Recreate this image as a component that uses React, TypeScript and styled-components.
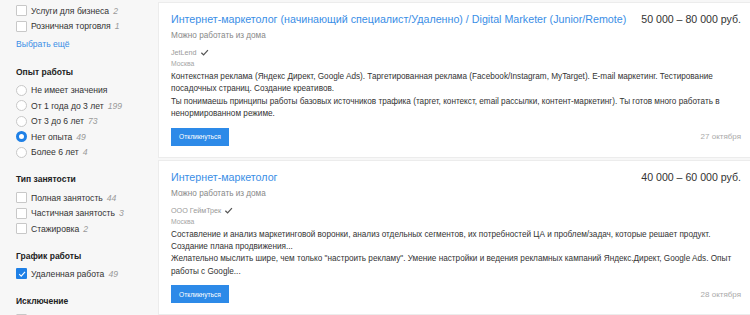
import React from 'react';
import styled, { createGlobalStyle } from 'styled-components';

const Global = createGlobalStyle`
  html, body { margin: 0; padding: 0; background: #f7f7f7; overflow: hidden; }
  body { font-family: "Liberation Sans", Arial, sans-serif; }
`;

const Page = styled.div`
  display: flex;
  width: 752px;
  height: 315px;
  overflow: hidden;
`;

const Sidebar = styled.aside`
  width: 158px;
  flex: none;
  box-sizing: border-box;
  padding: 3px 0 0 16px;
  color: #333;
`;

const Row = styled.div`
  display: flex;
  align-items: center;
  height: 15.5px;
  font-size: 8.6px;
  white-space: nowrap;
`;

const Box = styled.span<{ $round?: boolean; $checked?: boolean }>`
  width: 11px;
  height: 11px;
  flex: none;
  box-sizing: border-box;
  margin-right: 4px;
  background: ${(p) => (p.$checked && !p.$round ? '#1f80e6' : '#fff')};
  border: ${(p) =>
    p.$checked ? (p.$round ? '3.5px solid #1f80e6' : 'none') : '1px solid #c8c8c8'};
  border-radius: ${(p) => (p.$round ? '50%' : '1px')};
  display: flex;
  align-items: center;
  justify-content: center;
`;

const Count = styled.span`
  margin-left: 4px;
  font-style: italic;
  color: #9a9a9a;
`;

const More = styled.a`
  display: block;
  margin-top: 3px;
  height: 14px;
  line-height: 14px;
  font-size: 8.6px;
  color: #3a8ee6;
  text-decoration: none;
`;

const Heading = styled.div<{ $first?: boolean }>`
  margin-top: ${(p) => (p.$first ? '14px' : '12.25px')};
  margin-bottom: 3.5px;
  height: 14px;
  line-height: 14px;
  font-size: 8.5px;
  font-weight: bold;
  color: #222;
`;

const Main = styled.main`
  flex: 1;
  min-width: 0;
  display: flex;
  flex-direction: column;
  gap: 2px;
  padding-top: 2px;
`;

const Card = styled.article`
  background: #fff;
  border: 1px solid #ececec;
  padding: 9px 10px 11px 12px;
`;

const TitleRow = styled.div`
  display: flex;
  justify-content: space-between;
  align-items: baseline;
  line-height: 14px;
`;

const Title = styled.a`
  font-size: 10.7px;
  color: #3a8ee6;
  text-decoration: none;
`;

const Salary = styled.span`
  font-size: 10.6px;
  color: #333;
  white-space: nowrap;
`;

const Sub = styled.div`
  margin-top: 3px;
  font-size: 8.2px;
  line-height: 13px;
  color: #888;
`;

const Company = styled.div`
  margin-top: 5px;
  display: flex;
  align-items: center;
  gap: 3px;
  font-size: 7.2px;
  line-height: 11px;
  color: #999;
`;

const City = styled.div`
  font-size: 6.8px;
  line-height: 11px;
  color: #a5a5a5;
`;

const Desc = styled.div`
  margin-top: 2px;
  font-size: 8.2px;
  line-height: 12.3px;
  color: #333;
`;

const Line = styled.div`
  white-space: nowrap;
`;

const Footer = styled.div`
  margin-top: 7.5px;
  display: flex;
  justify-content: space-between;
  align-items: center;
`;

const Button = styled.button`
  height: 18px;
  width: 58px;
  padding: 0;
  border: none;
  background: #2d8ae8;
  color: #fff;
  font-family: inherit;
  font-size: 6.6px;
`;

const DateText = styled.span`
  font-size: 8px;
  color: #aaa;
`;

const Check = ({ color = '#fff', size = 8 }: { color?: string; size?: number }) => (
  <svg width={size} height={size} viewBox="0 0 10 10">
    <polyline points="1.5,5.2 4,7.6 8.8,2.4" fill="none" stroke={color} strokeWidth="1.4" />
  </svg>
);

type Opt = { label: string; count?: string; checked?: boolean };

const Checks = ({ items, round }: { items: Opt[]; round?: boolean }) => (
  <>
    {items.map((o) => (
      <Row key={o.label}>
        <Box $round={round} $checked={o.checked}>
          {o.checked && !round && <Check />}
        </Box>
        {o.label}
        {o.count && <Count>{o.count}</Count>}
      </Row>
    ))}
  </>
);

type Job = {
  title: string;
  salary: string;
  company: string;
  lines: string[];
  date: string;
};

const jobs: Job[] = [
  {
    title:
      'Интернет-маркетолог (начинающий специалист/Удаленно) / Digital Marketer (Junior/Remote)',
    salary: '50 000 – 80 000 руб.',
    company: 'JetLend',
    lines: [
      'Контекстная реклама (Яндекс Директ, Google Ads). Таргетированная реклама (Facebook/Instagram, MyTarget). E-mail маркетинг. Тестирование',
      'посадочных страниц. Создание креативов.',
      'Ты понимаешь принципы работы базовых источников трафика (таргет, контекст, email рассылки, контент-маркетинг). Ты готов много работать в',
      'ненормированном режиме.',
    ],
    date: '27 октября',
  },
  {
    title: 'Интернет-маркетолог',
    salary: '40 000 – 60 000 руб.',
    company: 'ООО ГеймТрек',
    lines: [
      'Составление и анализ маркетинговой воронки, анализ отдельных сегментов, их потребностей ЦА и проблем/задач, которые решает продукт.',
      'Создание плана продвижения...',
      'Желательно мыслить шире, чем только "настроить рекламу". Умение настройки и ведения рекламных кампаний Яндекс.Директ, Google Ads. Опыт',
      'работы с Google...',
    ],
    date: '28 октября',
  },
];

export default function App() {
  return (
    <>
      <Global />
      <Page>
        <Sidebar>
          <Checks
            items={[
              { label: 'Услуги для бизнеса', count: '2' },
              { label: 'Розничная торговля', count: '1' },
            ]}
          />
          <More href="#">Выбрать ещё</More>
          <Heading $first>Опыт работы</Heading>
          <Checks
            round
            items={[
              { label: 'Не имеет значения' },
              { label: 'От 1 года до 3 лет', count: '199' },
              { label: 'От 3 до 6 лет', count: '73' },
              { label: 'Нет опыта', count: '49', checked: true },
              { label: 'Более 6 лет', count: '4' },
            ]}
          />
          <Heading>Тип занятости</Heading>
          <Checks
            items={[
              { label: 'Полная занятость', count: '44' },
              { label: 'Частичная занятость', count: '3' },
              { label: 'Стажировка', count: '2' },
            ]}
          />
          <Heading>График работы</Heading>
          <Checks items={[{ label: 'Удаленная работа', count: '49', checked: true }]} />
          <Heading>Исключение</Heading>
          <Checks items={[{ label: 'Без вакансий для подростков' }]} />
        </Sidebar>
        <Main>
          {jobs.map((j) => (
            <Card key={j.title}>
              <TitleRow>
                <Title href="#">{j.title}</Title>
                <Salary>{j.salary}</Salary>
              </TitleRow>
              <Sub>Можно работать из дома</Sub>
              <Company>
                {j.company}
                <Check color="#555" size={9} />
              </Company>
              <City>Москва</City>
              <Desc>
                {j.lines.map((l) => (
                  <Line key={l}>{l}</Line>
                ))}
              </Desc>
              <Footer>
                <Button>Откликнуться</Button>
                <DateText>{j.date}</DateText>
              </Footer>
            </Card>
          ))}
        </Main>
      </Page>
    </>
  );
}
